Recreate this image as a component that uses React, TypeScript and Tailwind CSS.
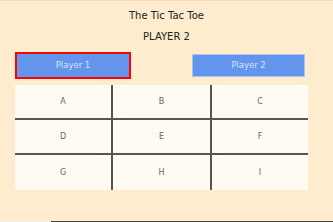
export default function App() {
  const rows = [
    ["A", "B", "C"],
    ["D", "E", "F"],
    ["G", "H", "I"],
  ];
  return (
    <div className="h-[222px] w-[333px] overflow-hidden bg-[#ffebcd] border-t border-[#f3d8bd] flex flex-col" style={{ fontFamily: '"DejaVu Sans", sans-serif' }}>
      <div className="pt-[8px] text-center text-[10px] text-[#222] leading-[14px]">The Tic Tac Toe</div>
      <div className="pt-[7px] text-center text-[10px] text-[#222] leading-[14px]">PLAYER 2</div>
      <div className="mt-[8px] flex justify-between pl-[15px] pr-[28px] items-center">
        <button className="w-[116px] h-[27px] bg-[#6495ed] border-2 border-[#ff0000] text-[#d6e2fa] text-[8.5px]">Player 1</button>
        <button className="w-[113px] h-[23px] bg-[#6495ed] border border-[#a9c4f5] text-[#d6e2fa] text-[8.5px]">Player 2</button>
      </div>
      <div className="mt-[6px] ml-[15px] w-[293px] grid grid-cols-[98px_99px_96px] bg-[#fffaf2]">
        {rows.map((r, ri) =>
          r.map((c, ci) => (
            <div
              key={c}
              className={`h-[35px] flex items-center justify-center text-[8px] text-[#666] ${ci < 2 ? "border-r-2 border-r-[#555]" : ""} ${ri < 2 ? "border-b-2 border-b-[#555]" : ""}`}
            >
              {c}
            </div>
          ))
        )}
      </div>
      <div className="mt-auto flex h-[1px]">
        <div className="w-[51px] bg-[#eeeeee]" />
        <div className="flex-1 bg-[#444]" />
      </div>
    </div>
  );
}
